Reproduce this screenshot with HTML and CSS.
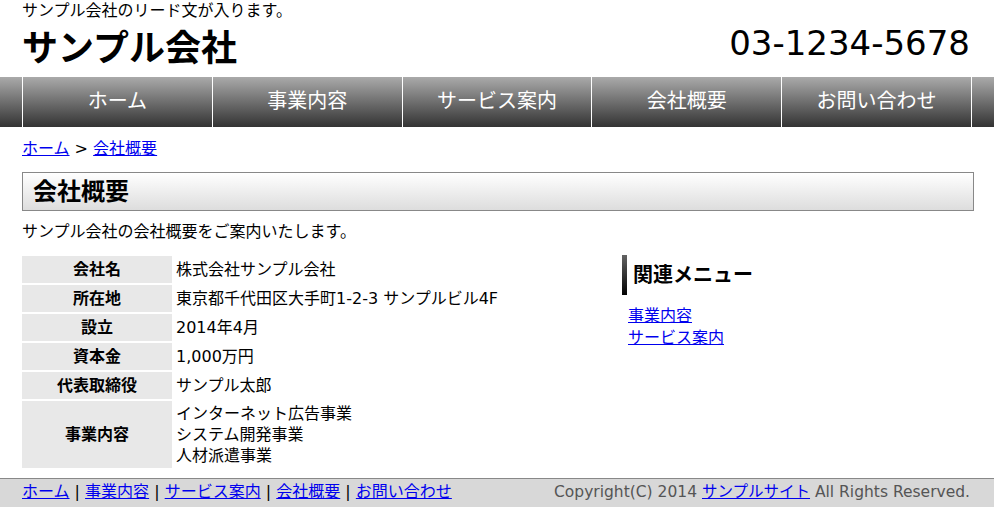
FILE: index.html
```html
<!DOCTYPE html>
<html lang="ja">
<head>
    <meta charset="UTF-8">
    <title>会社概要 | サンプル会社</title>
    <link rel="stylesheet" href="styles.css">
</head>
<body>

<header class="site-header">
    <div class="wrap header-inner">
        <div class="brand">
            <p class="lead">サンプル会社のリード文が入ります。</p>
            <h1 class="site-title">サンプル会社</h1>
        </div>
        <p class="tel">03-1234-5678</p>
    </div>
</header>

<!-- グローバルナビ -->
<nav class="global-nav">
    <ul class="wrap">
        <li><a href="#">ホーム</a></li>
        <li><a href="#">事業内容</a></li>
        <li><a href="#">サービス案内</a></li>
        <li><a href="#">会社概要</a></li>
        <li><a href="#">お問い合わせ</a></li>
    </ul>
</nav>

<div class="wrap contents">
    <main class="main">
        <p class="breadcrumb"><a href="#">ホーム</a> &gt; <a href="#">会社概要</a></p>
        <h2 class="page-title">会社概要</h2>
        <p class="intro">サンプル会社の会社概要をご案内いたします。</p>
        <table class="company">
            <tr><th>会社名</th><td>株式会社サンプル会社</td></tr>
            <tr><th>所在地</th><td>東京都千代田区大手町1-2-3 サンプルビル4F</td></tr>
            <tr><th>設立</th><td>2014年4月</td></tr>
            <tr><th>資本金</th><td>1,000万円</td></tr>
            <tr><th>代表取締役</th><td>サンプル太郎</td></tr>
            <tr><th>事業内容</th><td>インターネット広告事業<br>システム開発事業<br>人材派遣事業</td></tr>
        </table>
    </main>

    <aside class="side">
        <h3 class="side-title">関連メニュー</h3>
        <ul class="side-menu">
            <li><a href="#">事業内容</a></li>
            <li><a href="#">サービス案内</a></li>
        </ul>
    </aside>
</div>

<footer class="site-footer">
    <div class="wrap footer-inner">
        <p class="footer-nav">
            <a href="#">ホーム</a> | <a href="#">事業内容</a> | <a href="#">サービス案内</a> | <a href="#">会社概要</a> | <a href="#">お問い合わせ</a>
        </p>
        <p class="copyright">Copyright(C) 2014 <a href="#">サンプルサイト</a> All Rights Reserved.</p>
    </div>
</footer>

</body>
</html>
```

FILE: styles.css
```css
body {
    margin: 0;
    padding: 0;
    font-family: "DejaVu Sans", "Noto Sans CJK JP", sans-serif;
    font-size: 16px;
    color: #000;
    background-color: #fff;
}

p, h1, h2, h3, ul {
    margin: 0;
    padding: 0;
}

a {
    color: #0000ee;
}

.wrap {
    width: 950px;
    margin: 0 auto;
}

/* header */
.site-header {
    height: 77px;
}

.header-inner {
    display: flex;
    justify-content: space-between;
}

.lead {
    font-size: 16px;
    line-height: 21px;
}

.site-title {
    font-size: 36px;
    line-height: 50px;
    padding-top: 3px;
    font-weight: bold;
}

.tel {
    font-size: 34px;
    line-height: 40px;
    padding-top: 23px;
    padding-right: 2px;
}

/* global nav */
.global-nav {
    background: linear-gradient(#aaaaaa, #333333);
    height: 50px;
}

.global-nav ul {
    display: flex;
    list-style: none;
}

.global-nav li {
    width: 189px;
    border-left: 1px solid #fff;
}

.global-nav li:last-child {
    border-right: 1px solid #fff;
}

.global-nav a {
    display: block;
    height: 50px;
    line-height: 49px;
    color: #fff;
    text-decoration: none;
    text-align: center;
    font-size: 20px;
}

/* contents */
.contents {
    display: flex;
    justify-content: space-between;
}

.main {
    width: 952px;
    margin-right: -352px;
}

.breadcrumb {
    font-size: 16px;
    line-height: 22px;
    padding-top: 11px;
}

.page-title {
    margin-top: 12px;
    border: 1px solid #888;
    background: linear-gradient(#ffffff, #dddddd);
    font-size: 24px;
    line-height: 36px;
    padding: 1px 10px 0;
}

.intro {
    margin-top: 10px;
    line-height: 22px;
}

.company {
    margin-top: 13px;
    border-collapse: collapse;
}

.company th,
.company td {
    border-bottom: 2px solid #fff;
    padding: 3px 4px 2px;
    line-height: 22px;
    font-size: 16px;
}

.company th {
    width: 142px;
    background-color: #e8e8e8;
    text-align: center;
}

.company td {
    text-align: left;
}

.company tr:last-child td {
    line-height: 21px;
    padding-top: 2px;
}

/* side */
.side {
    width: 350px;
    padding-top: 128px;
}

.side-title {
    border-left: 5px solid #222;
    border-image: linear-gradient(#666, #000) 1;
    font-size: 20px;
    line-height: 40px;
    padding-left: 6px;
}

.side-menu {
    list-style: none;
    margin-top: 10px;
    padding-left: 6px;
    line-height: 22px;
}

/* footer */
.site-footer {
    margin-top: 8px;
    border-top: 1px solid #888;
    background-color: #d8d8d8;
    height: 30px;
}

.footer-inner {
    display: flex;
    justify-content: space-between;
    line-height: 26px;
}

.footer-nav {
    font-size: 16px;
}

.copyright {
    color: #555;
    font-size: 15.5px;
    padding-right: 2px;
}
```
